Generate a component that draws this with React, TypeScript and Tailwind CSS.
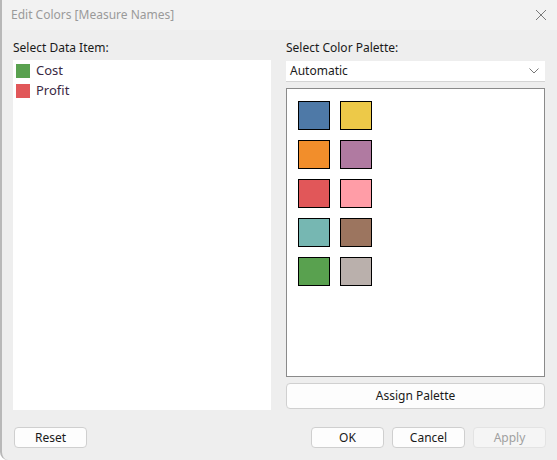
const items = [
  { label: "Cost", color: "#59a14f" },
  { label: "Profit", color: "#e15759" },
];

const palette = [
  ["#4e79a7", "#edc948"],
  ["#f28e2b", "#b07aa1"],
  ["#e15759", "#ff9da7"],
  ["#76b7b2", "#9c755f"],
  ["#59a14f", "#bab0ac"],
];

function Btn({ label, disabled }: { label: string; disabled?: boolean }) {
  return (
    <button
      className={
        "w-[73px] h-[21px] rounded-[4px] border text-[12px] leading-none " +
        (disabled
          ? "border-[#e3e3e3] bg-[#f5f5f5] text-[#a0a0a0]"
          : "border-[#cfcfcf] bg-[#fdfdfd] text-[#1a1a1a]")
      }
    >
      {label}
    </button>
  );
}

export default function App() {
  return (
    <div
      className="w-[557px] h-[460px] bg-[#eeeeee] border-l-2 border-[#b8b8b8] rounded-bl-[8px] flex flex-col text-[#1a1a1a]"
      style={{ fontFamily: '"Segoe UI", "Noto Sans", "Open Sans", sans-serif' }}
    >
      {/* Title bar */}
      <div className="h-[30px] bg-[#f2f2f2] flex items-center justify-between pl-[9px] pr-[9px]">
        <span className="text-[12px] text-[#9a9a9a]">Edit Colors [Measure Names]</span>
        <svg width="14" height="14" viewBox="0 0 14 14" className="text-[#7a7a7a]">
          <path d="M2 2 L12 12 M12 2 L2 12" stroke="currentColor" strokeWidth="1" fill="none" />
        </svg>
      </div>

      <div className="flex gap-[15px] pl-[11px] pt-[10px]">
        {/* Left column */}
        <div className="w-[258px] flex flex-col">
          <div className="text-[12px] h-[20px] leading-[16px]">Select Data Item:</div>
          <div className="h-[350px] bg-white pt-[1px] pl-[3px]">
            {items.map((it) => (
              <div key={it.label} className="flex items-center gap-[6px] h-[20px]">
                <span className="w-[14px] h-[14px]" style={{ background: it.color }} />
                <span className="text-[13px] text-[#3a2a44]">{it.label}</span>
              </div>
            ))}
          </div>
        </div>

        {/* Right column */}
        <div className="w-[259px] flex flex-col">
          <div className="text-[12px] h-[21px] leading-[16px]">Select Color Palette:</div>
          <div className="h-[21px] bg-white border-b border-[#d4d4d4] flex items-center justify-between pl-[4px] pr-[6px]">
            <span className="text-[12px]">Automatic</span>
            <svg width="10" height="6" viewBox="0 0 10 6">
              <path d="M0.5 0.5 L5 5 L9.5 0.5" stroke="#777" strokeWidth="1" fill="none" />
            </svg>
          </div>
          <div className="mt-[6px] h-[289px] bg-white border border-[#8a8a8a] pt-[12px] pl-[11px] flex flex-col gap-[10px]">
            {palette.map((row, i) => (
              <div key={i} className="flex gap-[10px]">
                {row.map((c) => (
                  <span key={c} className="w-[32px] h-[29px] border border-black" style={{ background: c }} />
                ))}
              </div>
            ))}
          </div>
          <button className="mt-[6px] h-[26px] rounded-[4px] border border-[#d0d0d0] bg-[#fdfdfd] text-[12px]">
            Assign Palette
          </button>
        </div>
      </div>

      {/* Footer */}
      <div className="flex items-center justify-between pl-[12px] pr-[11px] mt-[17px]">
        <Btn label="Reset" />
        <div className="flex gap-[8px]">
          <Btn label="OK" />
          <Btn label="Cancel" />
          <Btn label="Apply" disabled />
        </div>
      </div>
    </div>
  );
}
